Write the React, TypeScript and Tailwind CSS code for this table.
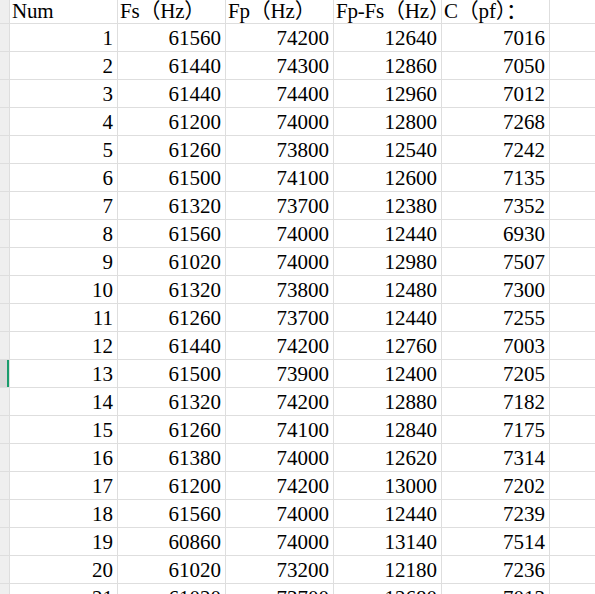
const rows: [number, number, number, number, number][] = [
  [1, 61560, 74200, 12640, 7016],
  [2, 61440, 74300, 12860, 7050],
  [3, 61440, 74400, 12960, 7012],
  [4, 61200, 74000, 12800, 7268],
  [5, 61260, 73800, 12540, 7242],
  [6, 61500, 74100, 12600, 7135],
  [7, 61320, 73700, 12380, 7352],
  [8, 61560, 74000, 12440, 6930],
  [9, 61020, 74000, 12980, 7507],
  [10, 61320, 73800, 12480, 7300],
  [11, 61260, 73700, 12440, 7255],
  [12, 61440, 74200, 12760, 7003],
  [13, 61500, 73900, 12400, 7205],
  [14, 61320, 74200, 12880, 7182],
  [15, 61260, 74100, 12840, 7175],
  [16, 61380, 74000, 12620, 7314],
  [17, 61200, 74200, 13000, 7202],
  [18, 61560, 74000, 12440, 7239],
  [19, 60860, 74000, 13140, 7514],
  [20, 61020, 73200, 12180, 7236],
  [21, 61020, 73700, 12680, 7013],
];

const headers = ["Num", "Fs（Hz）", "Fp（Hz）", "Fp-Fs（Hz）", "C（pf）："];

export default function App() {
  return (
    <div
      className="h-[594px] w-[595px] overflow-hidden bg-white text-black"
      style={{ fontFamily: '"Liberation Serif", "Noto Sans CJK SC", serif' }}
    >
      {/* header row */}
      <div className="flex h-[24px] border-b border-[#dedede]">
        <div className="w-[10px] shrink-0 border-r border-[#dedede] bg-[#efefef]" />
        {headers.map((h) => (
          <div
            key={h}
            className="w-[108px] shrink-0 whitespace-nowrap border-r border-[#dedede] pl-[2px] text-[21px] leading-[23px] tracking-[-0.2px]"
          >
            {h}
          </div>
        ))}
        <div className="flex-1" />
      </div>

      {rows.map((r) => {
        const active = r[0] === 13;
        return (
          <div key={r[0]} className="flex h-[28px] border-b border-[#dedede]">
            <div
              className={`relative w-[10px] shrink-0 border-r border-[#dedede] ${
                active ? "bg-[#d9d9d9]" : "bg-[#efefef]"
              }`}
            >
              {active && <div className="absolute right-0 top-0 h-full w-[2px] bg-[#1a9c6c]" />}
            </div>
            {r.map((v, i) => (
              <div
                key={i}
                className="flex w-[108px] shrink-0 items-end justify-end border-r border-[#dedede] pb-[2px] pr-[4px] text-[21px] leading-[22px]"
              >
                {v}
              </div>
            ))}
            <div className="flex-1" />
          </div>
        );
      })}
    </div>
  );
}
